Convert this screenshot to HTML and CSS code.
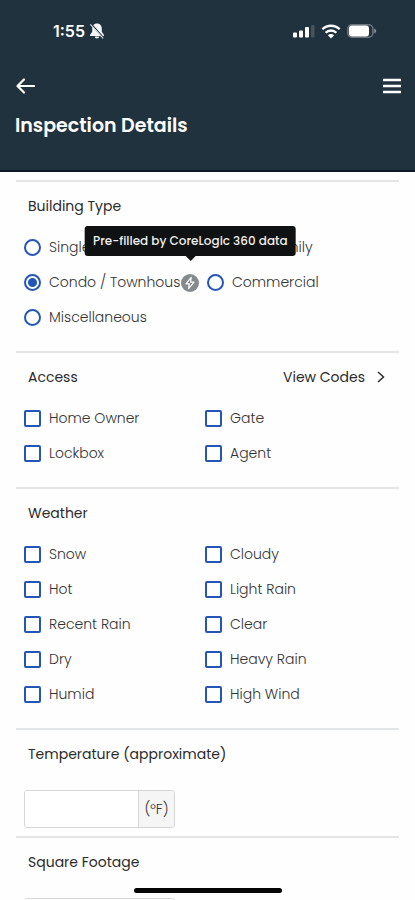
FILE: index.html
```html
<!DOCTYPE html>
<html lang="en">
<head>
<meta charset="utf-8">
<meta name="viewport" content="width=device-width, initial-scale=1">
<title>Inspection Details</title>
<link rel="stylesheet" href="styles.css">
</head>
<body>
<header class="header">
  <div class="status">
    <div class="status-time">
      <span>1:55</span>
      <svg width="16" height="18" viewBox="0 0 16 18" aria-hidden="true">
        <path d="M8 1.500c-3 0-4.800 2.200-4.800 5v3.300L1 13v.9h14V13l-2.200-3.200V6.500c0-2.800-1.800-5-4.800-5z" fill="#f4f6f7"/>
        <path d="M5.800 14.600h4.400a2.200 2 0 0 1-4.400 0z" fill="#f4f6f7"/>
        <path d="M2.300 1.800l12.500 14" stroke="#21323f" stroke-width="1.200"/>
        <path d="M1.300 2.300l12.900 14" stroke="#d5dadd" stroke-width="1.200"/>
      </svg>
    </div>
    <div class="status-icons">
      <svg width="22" height="14" viewBox="0 0 22 14" aria-hidden="true">
        <rect x="0" y="8.500" width="4" height="5" rx="1" fill="#fff"/>
        <rect x="6" y="6.500" width="4" height="7" rx="1" fill="#fff"/>
        <rect x="12" y="3" width="4" height="10.500" rx="1" fill="#fff"/>
        <rect x="18" y="1" width="3.500" height="12.500" rx="1" fill="#46545f"/>
      </svg>
      <svg width="20" height="15" viewBox="0 0 20 15" aria-hidden="true">
        <g fill="none" stroke="#fff" stroke-width="2.300">
          <path d="M1.300 5.300a12.400 12.400 0 0 1 17.400 0"/>
          <path d="M4.600 8.700a7.700 7.700 0 0 1 10.800 0"/>
        </g>
        <path d="M10 14.500l-3.100-3.200a4.400 4.400 0 0 1 6.200 0z" fill="#fff"/>
      </svg>
      <svg width="30" height="14" viewBox="0 0 30 14" aria-hidden="true">
        <rect x=".8" y=".8" width="25" height="12.400" rx="4" fill="none" stroke="#6b7780" stroke-width="1.500"/>
        <rect x="2" y="1.500" width="20" height="11" rx="3" fill="#fff"/>
        <path d="M27.200 4.500v5c1.200-.5 2-1.400 2-2.500s-.8-2-2-2.500z" fill="#87919a"/>
      </svg>
    </div>
  </div>
  <nav class="nav">
    <button class="icon-button" type="button" aria-label="Back">
      <svg width="20" height="18" viewBox="0 0 20 18" fill="none" stroke="#fff" stroke-width="2.200" stroke-linecap="round" stroke-linejoin="round"><path d="M19 9H3M9 2.500L2.500 9 9 15.500"/></svg>
    </button>
    <button class="icon-button" type="button" aria-label="Menu">
      <svg width="18" height="18" viewBox="0 0 18 18" fill="none" stroke="#fff" stroke-width="2.400"><path d="M0 3h18M0 9h18M0 15h18"/></svg>
    </button>
  </nav>
  <h1 class="title">Inspection Details</h1>
</header>

<main class="content">
  <section class="section">
    <h2 class="heading" id="building">Building Type</h2>
    <div class="options options-radio" role="radiogroup" aria-labelledby="building">
      <label class="option"><input class="control radio" type="radio" name="building">Single Family</label>
      <label class="option"><input class="control radio" type="radio" name="building">Multi Family</label>
      <div class="option-group">
        <label class="option"><input class="control radio" type="radio" name="building" checked>Condo / Townhous</label>
        <button class="prefill" type="button" aria-label="Pre-filled" aria-describedby="prefill-tip">
          <svg width="18" height="18" viewBox="0 0 18 18" aria-hidden="true">
            <circle cx="9" cy="9" r="9" fill="#858a8c"/>
            <path d="M10.200 3.300L5 9.800h3.300l-.7 4.900 5.400-6.600H9.600z" fill="none" stroke="#fff" stroke-width="1.200" stroke-linejoin="round"/>
          </svg>
          <span class="tooltip" id="prefill-tip" role="tooltip">Pre-filled by CoreLogic 360 data</span>
        </button>
      </div>
      <label class="option"><input class="control radio" type="radio" name="building">Commercial</label>
      <label class="option"><input class="control radio" type="radio" name="building">Miscellaneous</label>
    </div>
  </section>

  <section class="section">
    <div class="heading-row">
      <h2 class="heading">Access</h2>
      <a class="codes" href="#codes">View Codes
        <svg width="8" height="12" viewBox="0 0 8 12" fill="none" stroke="#333" stroke-width="1.600" aria-hidden="true"><path d="M1 1l5.500 5L1 11"/></svg>
      </a>
    </div>
    <div class="options">
      <label class="option"><input class="control" type="checkbox">Home Owner</label>
      <label class="option"><input class="control" type="checkbox">Gate</label>
      <label class="option"><input class="control" type="checkbox">Lockbox</label>
      <label class="option"><input class="control" type="checkbox">Agent</label>
    </div>
  </section>

  <section class="section">
    <h2 class="heading">Weather</h2>
    <div class="options">
      <label class="option"><input class="control" type="checkbox">Snow</label>
      <label class="option"><input class="control" type="checkbox">Cloudy</label>
      <label class="option"><input class="control" type="checkbox">Hot</label>
      <label class="option"><input class="control" type="checkbox">Light Rain</label>
      <label class="option"><input class="control" type="checkbox">Recent Rain</label>
      <label class="option"><input class="control" type="checkbox">Clear</label>
      <label class="option"><input class="control" type="checkbox">Dry</label>
      <label class="option"><input class="control" type="checkbox">Heavy Rain</label>
      <label class="option"><input class="control" type="checkbox">Humid</label>
      <label class="option"><input class="control" type="checkbox">High Wind</label>
    </div>
  </section>

  <section class="section section-field">
    <h2 class="heading"><label for="temperature">Temperature (approximate)</label></h2>
    <div class="field">
      <input class="field-input" id="temperature" type="text" inputmode="numeric">
      <span class="field-unit">(°F)</span>
    </div>
  </section>

  <section class="section section-field">
    <h2 class="heading"><label for="footage">Square Footage</label></h2>
    <div class="field">
      <input class="field-input" id="footage" type="text" inputmode="numeric">
    </div>
  </section>
</main>
<div class="home-indicator"></div>
</body>
</html>
```
FILE: styles.css
```css
* {
  box-sizing: border-box;
}

body {
  margin: 0;
  height: 100vh;
  display: flex;
  flex-direction: column;
  background: #fefefe;
  color: #2b2b2b;
  font-family: Poppins, Inter, sans-serif;
  font-size: 14px;
}

.header {
  flex: none;
  padding: 16px 14px 28px 15px;
  background: #21323f;
  border-bottom: 2px solid #0b1826;
  color: #fff;
}

.status {
  display: flex;
  justify-content: space-between;
  align-items: center;
  height: 30px;
  padding: 0 24px 0 38px;
}

.status-time {
  display: flex;
  align-items: center;
  gap: 4px;
  font-family: Inter, sans-serif;
  font-size: 16px;
  font-weight: 600;
}

.status-icons {
  display: flex;
  align-items: center;
  gap: 6px;
}

.nav {
  display: flex;
  justify-content: space-between;
  align-items: center;
  height: 40px;
  margin-top: 20px;
}

.icon-button {
  display: flex;
  padding: 0;
  border: 0;
  background: none;
  cursor: pointer;
}

.title {
  margin: 4px 0 0;
  font-size: 19px;
  line-height: 32px;
  font-weight: 600;
}

.content {
  flex: 1;
  min-height: 0;
  overflow-y: auto;
  scrollbar-width: none;
  padding: 8px 16px 40px;
}

.section {
  border-top: 2px solid #e4e5e6;
  padding: 0 8px 16px;
}

.section-field {
  padding-bottom: 8px;
}

.heading-row {
  display: flex;
  justify-content: space-between;
  align-items: center;
  padding-right: 6px;
}

.heading {
  margin: 0;
  padding-left: 4px;
  font-size: 14px;
  line-height: 48px;
  font-weight: 400;
}

.codes {
  display: flex;
  align-items: center;
  gap: 12px;
  color: inherit;
  text-decoration: none;
}

.options {
  display: grid;
  grid-template-columns: 1fr 1fr;
  grid-auto-rows: 35px;
  padding-right: 5px;
}

.options-radio {
  padding-right: 1px;
}

.option,
.option-group {
  display: flex;
  align-items: center;
  white-space: nowrap;
  color: #333;
  font-weight: 300;
}

.option {
  gap: 8px;
}

.option-group {
  gap: 1px;
}

.control {
  appearance: none;
  flex: none;
  width: 17px;
  height: 17px;
  margin: 0;
  border: 2px solid #2456b8;
  border-radius: 2px;
  background: #fff;
}

.radio {
  border-radius: 50%;
}

.control:checked {
  background: #2456b8;
}

.radio:checked {
  background: radial-gradient(circle, #2456b8 4px, #fff 5px);
}

.prefill {
  position: relative;
  display: flex;
  padding: 0;
  border: 0;
  background: none;
}

.tooltip {
  position: absolute;
  bottom: 36px;
  left: 50%;
  transform: translateX(-50%);
  padding: 0 8px;
  border-radius: 3px;
  background: #101112;
  color: #eee;
  font-family: Poppins, Inter, sans-serif;
  font-size: 12px;
  line-height: 30px;
  font-weight: 500;
  white-space: nowrap;
}

.tooltip::after {
  content: "";
  position: absolute;
  top: 100%;
  left: 50%;
  margin-left: -5px;
  border: 5px solid transparent;
  border-top-color: #101112;
  border-bottom: 0;
}

.field {
  display: flex;
  width: 151px;
  height: 38px;
  margin-top: 12px;
  border: 1px solid #d6d6d6;
  border-radius: 3px;
  overflow: hidden;
}

.field-input {
  flex: 1;
  min-width: 0;
  padding: 0 8px;
  border: 0;
  background: #fff;
  font: inherit;
}

.field-unit {
  display: flex;
  align-items: center;
  justify-content: center;
  width: 36px;
  border-left: 1px solid #d6d6d6;
  background: #f5f5f5;
  color: #333;
  font-weight: 300;
}

.home-indicator {
  position: fixed;
  bottom: 7px;
  left: 50%;
  width: 148px;
  height: 5px;
  margin-left: -74px;
  border-radius: 3px;
  background: #050505;
}
```
